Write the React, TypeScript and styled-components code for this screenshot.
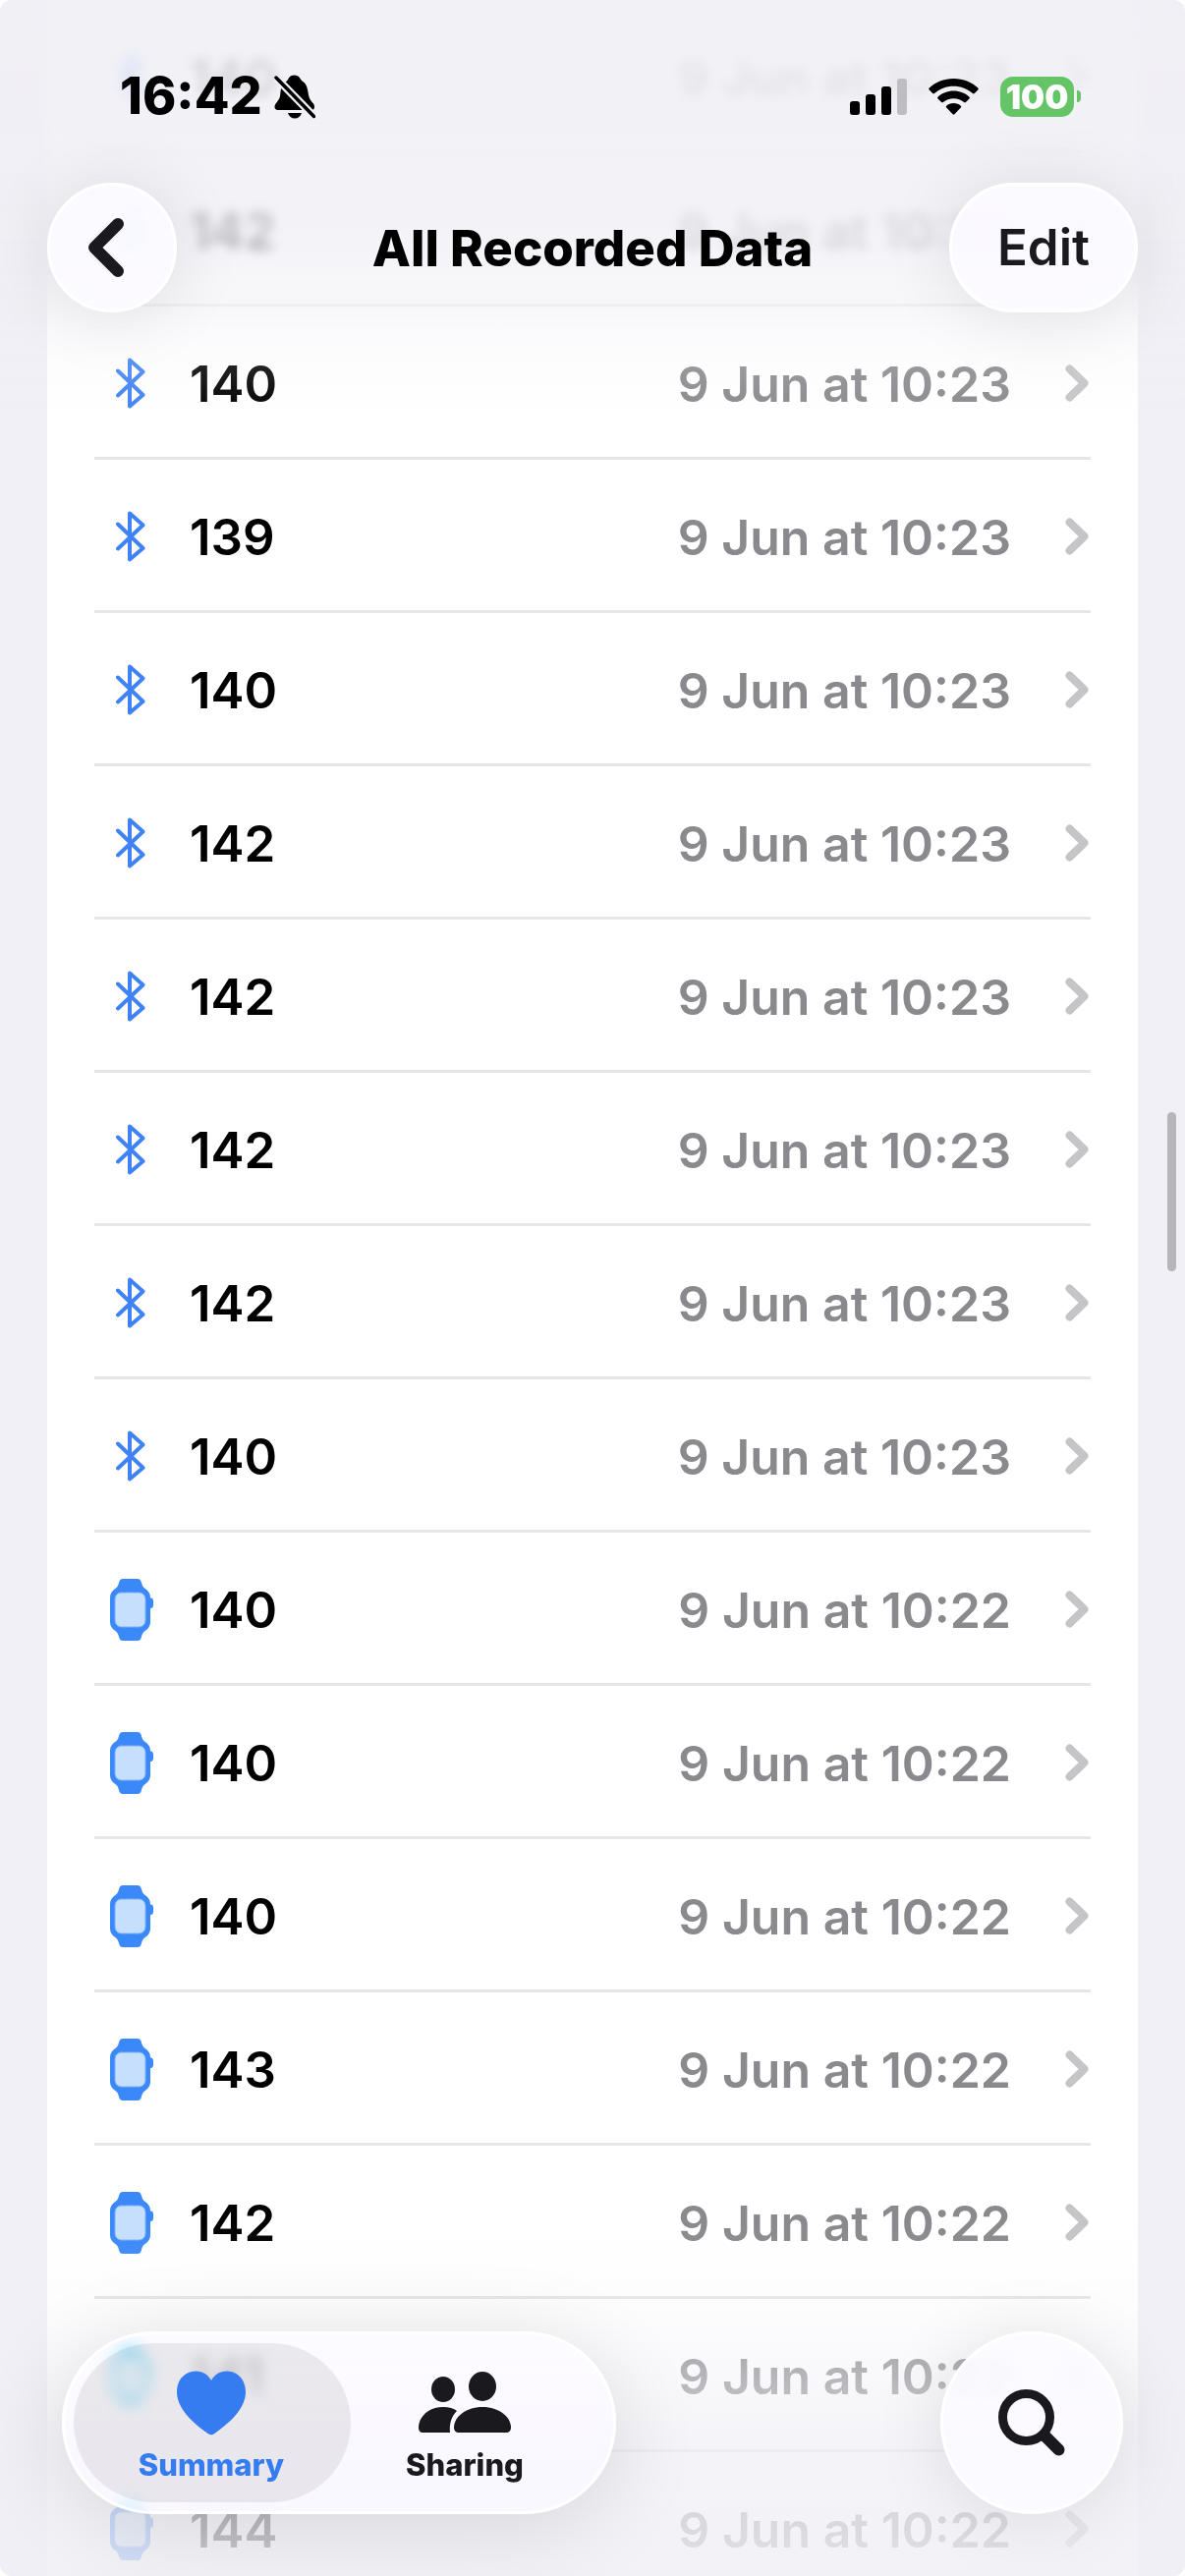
import React from "react";
import styled, { createGlobalStyle } from "styled-components";

const GlobalStyle = createGlobalStyle`
  * { box-sizing: border-box; }
  html { background: #ffffff; }
  body {
    margin: 0;
    font-family: Inter, "Liberation Sans", sans-serif;
    color: #000000;
  }
  button { font: inherit; color: inherit; border: 0; padding: 0; background: none; }
  a { color: inherit; text-decoration: none; }
`;

const Screen = styled.div`
  position: relative;
  height: 100vh;
  overflow: hidden;
  border-radius: 12px;
  background: #f1f0f6;
`;

const List = styled.ul`
  list-style: none;
  margin: 0 48px;
  padding: 0 48px;
  background: #ffffff;
`;

const Row = styled.li`
  height: 156px;
  border-bottom: 3px solid #e6e6e6;
`;

const RowLink = styled.a`
  display: grid;
  grid-template-columns: 76px 1fr auto 26px;
  align-items: center;
  height: 100%;
  padding-top: 3px;
  line-height: 60px;
  font-weight: 600;
`;

const SourceIcon = styled.span`
  display: flex;
  justify-content: center;
  svg { display: block; }
`;

const Value = styled.span`
  padding-top: 2px;
  padding-left: 21px;
  font-size: 51px;
`;

const Stamp = styled.time`
  padding-top: 2px;
  padding-right: 55px;
  color: #8a8a8e;
  font-size: 50px;
`;

const TopFade = styled.div`
  position: absolute;
  inset: 0 0 auto;
  height: 440px;
  background: linear-gradient(
    rgba(240, 239, 245, 0.9) 0,
    rgba(240, 239, 245, 0.86) 120px,
    rgba(240, 239, 245, 0.76) 240px,
    rgba(240, 239, 245, 0.5) 300px,
    rgba(240, 239, 245, 0.16) 365px,
    rgba(240, 239, 245, 0) 430px
  );
  pointer-events: none;
`;

const TopBlur = styled.div`
  position: absolute;
  inset: 0 0 auto;
  height: 330px;
  backdrop-filter: blur(6px);
  mask-image: linear-gradient(#000 0, #000 280px, transparent 330px);
  pointer-events: none;
`;

const BottomFade = styled.div`
  position: absolute;
  inset: auto 0 0;
  height: 360px;
  background: linear-gradient(
    rgba(240, 239, 245, 0) 0,
    rgba(240, 239, 245, 0.12) 80px,
    rgba(240, 239, 245, 0.4) 150px,
    rgba(240, 239, 245, 0.72) 230px,
    rgba(240, 239, 245, 0.78) 310px,
    rgba(240, 239, 245, 0.86) 360px
  );
  pointer-events: none;
`;

const TopChrome = styled.header`
  position: absolute;
  inset: 0 0 auto;
`;

const StatusBar = styled.div`
  display: flex;
  align-items: center;
  justify-content: space-between;
  padding: 68px 106px 58px 122px;
  font-size: 52px;
  line-height: 60px;
  font-weight: 800;
`;

const StatusGroup = styled.div<{ $gap: number }>`
  display: flex;
  align-items: center;
  gap: ${(p) => p.$gap}px;
  svg { display: block; }
`;

const Battery = styled.div`
  display: flex;
  align-items: center;
  gap: 3px;
`;

const BatteryBody = styled.span`
  width: 75px;
  height: 41px;
  border-radius: 13px;
  background: #65c466;
  color: #ffffff;
  font-size: 34px;
  line-height: 41px;
  font-weight: 900;
  text-align: center;
`;

const BatteryCap = styled.span`
  width: 4px;
  height: 12px;
  border-radius: 0 4px 4px 0;
  background: #65c466;
`;

const NavBar = styled.div`
  display: grid;
  grid-template-columns: 192px 1fr 192px;
  align-items: center;
  padding: 0 48px;
`;

const Title = styled.h1`
  margin: 0;
  padding-top: 2px;
  font-size: 51px;
  line-height: 60px;
  font-weight: 800;
  text-align: center;
  white-space: nowrap;
`;

const GlassButton = styled.button<{ $width: number; $height: number }>`
  display: flex;
  align-items: center;
  justify-content: center;
  width: ${(p) => p.$width}px;
  height: ${(p) => p.$height}px;
  border: 3px solid #ffffff;
  border-radius: ${(p) => p.$height / 2}px;
  background: rgba(252, 251, 255, 0.9);
  backdrop-filter: blur(8px) saturate(4);
  box-shadow: 0 4px 72px rgba(0, 0, 0, 0.1);
  color: #1a191e;
  font-size: 51px;
  line-height: 60px;
  font-weight: 600;
`;

const BackButton = styled(GlassButton)`
  padding-right: 12px;
`;

const BottomChrome = styled.footer`
  position: absolute;
  inset: auto 63px 63px;
  display: flex;
  align-items: center;
  justify-content: space-between;
`;

const Tabs = styled.nav`
  display: flex;
  height: 186px;
  padding: 9px;
  border: 3px solid #ffffff;
  border-radius: 93px;
  background: rgba(252, 251, 255, 0.72);
  backdrop-filter: blur(7px) saturate(4);
  box-shadow: 0 12px 90px rgba(0, 0, 0, 0.12);
`;

const Tab = styled.a<{ $active?: boolean }>`
  display: flex;
  flex-direction: column;
  align-items: center;
  width: ${(p) => (p.$active ? 282 : 258)}px;
  height: 162px;
  padding-top: 28px;
  padding-right: ${(p) => (p.$active ? 2 : 26)}px;
  gap: 12px;
  border-radius: 81px;
  background: ${(p) => (p.$active ? "rgba(0, 0, 0, 0.07)" : "transparent")};
  color: ${(p) => (p.$active ? "#357cf0" : "#1a191e")};
  font-size: 31px;
  line-height: 36px;
  font-weight: 800;
  svg { display: block; }
`;

const ScrollThumb = styled.div`
  position: absolute;
  top: 1132px;
  right: 9px;
  width: 9px;
  height: 162px;
  border-radius: 5px;
  background: #b5b5ba;
`;

const BluetoothIcon = () => (
  <svg width="32" height="52" viewBox="0 0 32 52" fill="none" stroke="#3f82f7" strokeWidth="4" strokeLinecap="round" strokeLinejoin="round" aria-label="Bluetooth">
    <path d="M2 13.500 27.500 38 14 49.500 V2.500 L27.500 14.500 2 38.500" />
  </svg>
);

const WatchIcon = () => (
  <svg width="44" height="63" viewBox="0 0 44 63" aria-label="Watch">
    <path
      fill="#3b88f8"
      d="M13 0H28C30 0 31 1 31.700 3C32.500 6 33 8 35 9.500C39 12 41 15 41 19V19.500H42C43.500 20 44 21 44 22.500V27C44 28.500 43 30 41.500 30H41V44C41 48 39 51 35 53.500C33 55 32.500 57 31.700 60C31 62 30 63 28 63H13C11 63 10 62 9.300 60C8.500 57 8 55 6 53.500C2 51 0 48 0 44V19C0 15 2 12 6 9.500C8 8 8.500 6 9.300 3C10 1 11 0 13 0Z"
    />
    <rect x="5" y="14" width="31" height="35" rx="6.500" fill="#c5dffc" stroke="#7fb3fb" strokeWidth="1" />
  </svg>
);

const Chevron = () => (
  <svg width="24" height="38" viewBox="0 0 24 38" fill="none" stroke="#c5c5c7" strokeWidth="8" strokeLinecap="round" strokeLinejoin="round" aria-hidden="true">
    <path d="M4.500 4.500 19.500 19 4.500 33.500" />
  </svg>
);

const BellOff = () => (
  <svg width="42" height="45" viewBox="0 0 42 45" aria-label="Silent mode">
    <path d="M13 6.500C15 4 15.500 0.500 20.500 0.500S26 4 28.500 6.500C35 10 34 19 36 24C37.500 28 41 29 41 32.500C41 35 40 36 38 36H4C1.500 36 0.500 34.500 0.500 33C0.500 29 5 27 6 22C7 16 6 10 13 6.500Z" />
    <path d="M14 39H28C27 42.500 24.500 44.500 21 44.500S15 42.500 14 39Z" />
    <path d="M2 3 41 43" stroke="#efeef4" strokeWidth="8" />
    <path d="M2 3 40.500 42.500" stroke="#000" strokeWidth="3.500" strokeLinecap="round" />
  </svg>
);

const Signal = () => (
  <svg width="58" height="37" viewBox="0 0 58 37" aria-label="Signal">
    <rect x="0" y="23" width="10" height="14" rx="3" />
    <rect x="16" y="16" width="10" height="21" rx="3" />
    <rect x="32" y="8" width="10" height="29" rx="3" />
    <rect x="48" y="0" width="10" height="37" rx="3" fill="#bdbdc2" />
  </svg>
);

const Wifi = () => (
  <svg width="51" height="37" viewBox="0 0 51 37" aria-label="Wi-Fi">
    <path d="M25.500 0C35.500 0 44 3.500 50.300 9.600C50.900 10.200 50.900 10.800 50.300 11.400L46.800 15C46.200 15.600 45.600 15.600 45 15C39.600 10.300 33 7.700 25.500 7.700S11.400 10.300 6 15C5.400 15.600 4.800 15.600 4.200 15L0.700 11.400C0.100 10.800 0.100 10.200 0.700 9.600C7 3.500 15.500 0 25.500 0Z" />
    <path d="M25.500 12.500C31.800 12.500 37.300 14.800 41.500 18.700C42.100 19.300 42.100 19.900 41.500 20.500L37.900 24C37.300 24.600 36.700 24.500 36.100 24C33.200 21.600 29.600 20.200 25.500 20.200S17.800 21.600 14.900 24C14.300 24.500 13.700 24.600 13.100 24L9.500 20.500C8.900 19.900 8.900 19.300 9.500 18.700C13.700 14.800 19.200 12.500 25.500 12.500Z" />
    <path d="M25.500 25C28.400 25 30.900 26 32.800 27.700C33.400 28.300 33.400 28.900 32.800 29.500L26.400 36.200C25.800 36.800 25.200 36.800 24.600 36.200L18.200 29.500C17.600 28.900 17.600 28.300 18.200 27.700C20.100 26 22.600 25 25.500 25Z" />
  </svg>
);

const BackIcon = () => (
  <svg width="38" height="62" viewBox="0 0 38 62" fill="none" stroke="#1a191e" strokeWidth="12" strokeLinecap="round" strokeLinejoin="round" aria-hidden="true">
    <path d="M31 7 7 31 31 55" />
  </svg>
);

const SearchIcon = () => (
  <svg width="70" height="70" viewBox="0 0 70 70" fill="none" stroke="#1a191e" strokeLinecap="round" aria-hidden="true">
    <circle cx="29.500" cy="29.500" r="24" strokeWidth="9" />
    <path d="M49 49 62.500 62.500" strokeWidth="12" />
  </svg>
);

const HeartIcon = () => (
  <svg width="70" height="66" viewBox="0 0 70 66" fill="#357cf0" aria-hidden="true">
    <path d="M35 10C31.500 4 26.500 0.500 19.500 0.500C8.500 0.500 0 9 0 21.500C0 37 13.500 51.500 32 64.200C34 65.600 36 65.600 38 64.200C56.500 51.500 70 37 70 21.500C70 9 61.500 0.500 50.500 0.500C43.500 0.500 38.500 4 35 10Z" />
  </svg>
);

const PeopleIcon = () => (
  <svg width="94" height="66" viewBox="0 0 94 66" fill="#1a191e" aria-hidden="true">
    <ellipse cx="25" cy="19" rx="12" ry="13" />
    <ellipse cx="65" cy="16" rx="14" ry="15" />
    <path d="M39 41C34 46 31 53 32 63H5C1.500 63 0 61 0 58C0 47 10 37 25 37C31 37 36 38.500 39 41Z" />
    <path d="M65 37C82 37 94 47 94 58C94 61 92 63 89 63H41C38 63 36 61 36 58C36 47 48 37 65 37Z" />
  </svg>
);

type Entry = { value: number; time: string; source: "bluetooth" | "watch" };

const late = [140, 142, 140, 139, 140, 142, 142, 142, 142, 140];
const early = [140, 140, 140, 143, 142, 141, 144];

const entries: Entry[] = [
  ...late.map((value): Entry => ({ value, time: "10:23", source: "bluetooth" })),
  ...early.map((value): Entry => ({ value, time: "10:22", source: "watch" })),
];

export default function App() {
  return (
    <>
      <GlobalStyle />
      <Screen>
        <List>
          {entries.map((entry, i) => (
            <Row key={i}>
              <RowLink href="#entry">
                <SourceIcon>{entry.source === "watch" ? <WatchIcon /> : <BluetoothIcon />}</SourceIcon>
                <Value>{entry.value}</Value>
                <Stamp>9 Jun at {entry.time}</Stamp>
                <Chevron />
              </RowLink>
            </Row>
          ))}
        </List>
        <TopBlur />
        <TopFade />
        <BottomFade />
        <ScrollThumb />
        <TopChrome>
          <StatusBar>
            <StatusGroup $gap={12}>
              <span>16:42</span>
              <BellOff />
            </StatusGroup>
            <StatusGroup $gap={22}>
              <Signal />
              <Wifi />
              <Battery>
                <BatteryBody>100</BatteryBody>
                <BatteryCap />
              </Battery>
            </StatusGroup>
          </StatusBar>
          <NavBar>
            <BackButton $width={132} $height={132} aria-label="Back">
              <BackIcon />
            </BackButton>
            <Title>All Recorded Data</Title>
            <GlassButton $width={192} $height={132}>Edit</GlassButton>
          </NavBar>
        </TopChrome>
        <BottomChrome>
          <Tabs>
            <Tab href="#summary" $active>
              <HeartIcon />
              Summary
            </Tab>
            <Tab href="#sharing">
              <PeopleIcon />
              Sharing
            </Tab>
          </Tabs>
          <GlassButton $width={186} $height={186} aria-label="Search">
            <SearchIcon />
          </GlassButton>
        </BottomChrome>
      </Screen>
    </>
  );
}
